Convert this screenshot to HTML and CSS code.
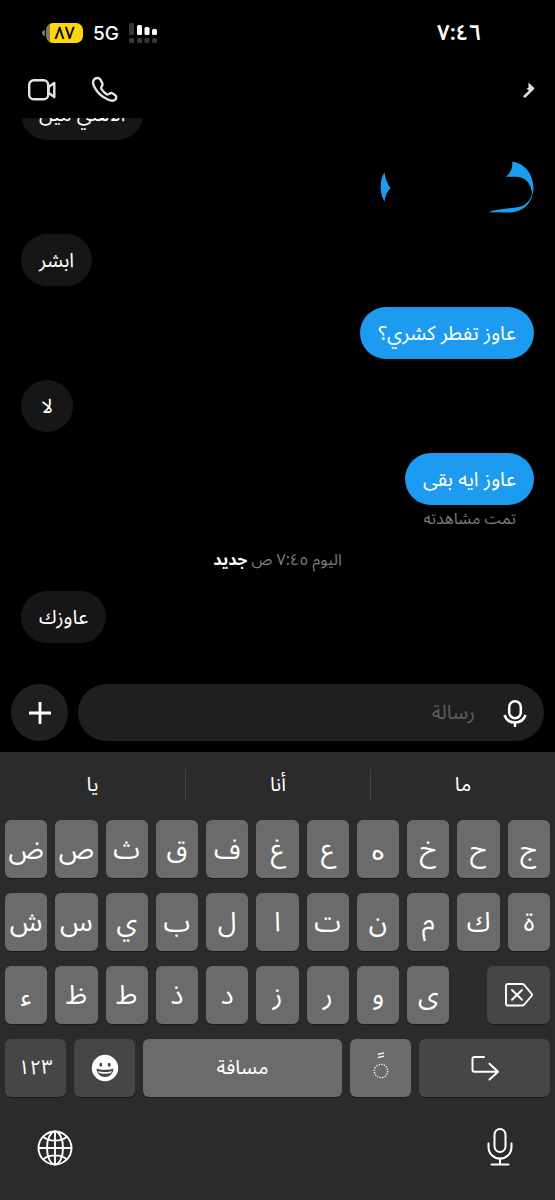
FILE: index.html
```html
<!DOCTYPE html>
<html lang="ar" dir="rtl">
<head>
<meta charset="utf-8">
<meta name="viewport" content="width=device-width, initial-scale=1">
<title>رسائل</title>
<link rel="stylesheet" href="styles.css">
</head>
<body>
<div class="phone">
  <div class="status">
    <time class="clock">٧:٤٦</time>
    <div class="indicators">
      <div class="battery"><svg class="cap" viewBox="0 0 3 6" aria-hidden="true"><path d="M3 0v6C1 6 0 4.500 0 3s1-3 3-3z"/></svg><span class="level">٨٧</span></div>
      <span class="network">5G</span>
      <svg class="signal" viewBox="0 0 29 20" aria-label="إشارة">
        <g fill="#373737"><rect width="5" height="12" rx="1.500"/><rect y="15" width="5" height="5" rx="1.500"/><rect x="8" y="15" width="5" height="5" rx="1.500"/><rect x="15.500" y="15" width="5" height="5" rx="1.500"/><rect x="23" y="15" width="5" height="5" rx="1.500"/></g>
        <g fill="#fff"><rect x="8" y="2" width="5" height="10" rx="1.500"/><rect x="15.500" y="4" width="5" height="8" rx="1.500"/><rect x="23" y="6" width="5" height="6" rx="1.500"/></g>
      </svg>
    </div>
  </div>

  <header class="bar">
    <button class="plain" aria-label="رجوع"><svg class="back" viewBox="0 0 12 16"><path d="M5.500.5 11.500 6.300 10.500 7.800 2 16 0 14.300 6 8.500 3.500 7 5.500 5.500z" fill="#dededc"/></svg></button>
    <div class="calls">
      <button class="plain" aria-label="مكالمة فيديو"><svg class="call-icon" viewBox="0 0 28 28" fill="none" stroke="#e4e4e4" stroke-width="2.400" stroke-linejoin="round"><rect x="1.200" y="4.300" width="19" height="19" rx="4.600"/><path d="M20.500 10.900 26.300 7v14l-5.800-4.200z"/></svg></button>
      <button class="plain" aria-label="مكالمة صوتية"><svg class="call-icon" viewBox="0 0 28 28" fill="none" stroke="#e4e4e4" stroke-width="2.400" stroke-linejoin="round"><path d="M2.600 3C4.200 1.700 7 1.700 8.100 3.200l2.200 3.900c.6 1.300.3 2.200-.6 3.300-.9 1.100-.9 1.700 0 3 1.300 1.900 2.700 3.300 4.500 4.500 1.200.8 1.900.8 3 0 1.100-.9 2.200-1.100 3.500-.4l2.600 1.700c1.400 1.100 1.300 3.400-.2 4.600-1.700 1.300-4.200 1.100-7.200-.3C9.700 20.700 4.500 15.500 1.900 9.900.6 7 .8 4.600 2.600 3z"/></svg></button>
    </div>
  </header>

  <main class="chat">
    <p class="bubble in">الاهلي مين</p>
    <svg class="covered" viewBox="0 0 154 52" aria-hidden="true"><path fill="#1d9bf0" d="M4.500 11.500C5.500 18 7 22 10.500 27 7 31 5 35 4.500 40.500-.7 33-.5 18 4.500 11.500zM132.300.7C145 2 153.500 14 153.500 27 153 42 143 51.500 129 51.500l-21-.3c12-4.500 24-3 35-6.500 5-3 8-7 9-12C151 21 144 15.500 135 15.700l-9.500 0C131 12 132.500 7 132.300.7z"/></svg>
    <p class="bubble in">ابشر</p>
    <p class="bubble out">عاوز تفطر كشري؟</p>
    <p class="bubble in">لا</p>
    <p class="bubble out">عاوز ايه بقى</p>
    <p class="seen">تمت مشاهدته</p>
    <p class="day">اليوم ٧:٤٥ ص <strong>جديد</strong></p>
    <p class="bubble in">عاوزك</p>
  </main>

  <form class="composer">
    <div class="field">
      <button class="plain" type="button" aria-label="رسالة صوتية"><svg class="voice" viewBox="0 0 24 28" fill="none" stroke="#fff" stroke-width="2.500"><rect x="6.200" y="2.200" width="11.600" height="17" rx="5.800"/><path d="M1.500 16C3 20.500 7 23.500 12 23.500S21 20.500 22.500 16M12 23.500V28"/></svg></button>
      <input class="message" type="text" aria-label="رسالة" placeholder="رسالة">
    </div>
    <button class="add" type="button" aria-label="إضافة"><svg class="plus" viewBox="0 0 22 22" stroke="#fff" stroke-width="2.800"><path d="M0 11h22M11 0v22"/></svg></button>
  </form>

  <section class="keyboard" dir="ltr" aria-label="لوحة المفاتيح">
    <div class="suggestions"><button>يا</button><button>أنا</button><button>ما</button></div>
    <div class="keys">
      <div class="row letters"><button class="key">ض</button><button class="key">ص</button><button class="key">ث</button><button class="key">ق</button><button class="key">ف</button><button class="key">غ</button><button class="key">ع</button><button class="key round-heh">ه</button><button class="key">خ</button><button class="key">ح</button><button class="key">ج</button></div>
      <div class="row letters"><button class="key">ش</button><button class="key">س</button><button class="key">ي</button><button class="key">ب</button><button class="key">ل</button><button class="key">ا</button><button class="key">ت</button><button class="key">ن</button><button class="key">م</button><button class="key">ك</button><button class="key">ة</button></div>
      <div class="row letters"><button class="key">ء</button><button class="key">ظ</button><button class="key">ط</button><button class="key">ذ</button><button class="key">د</button><button class="key">ز</button><button class="key">ر</button><button class="key">و</button><button class="key">ى</button><button class="key dark erase" aria-label="حذف"><svg class="glyph" viewBox="0 0 28 28" fill="none" stroke="#fff" stroke-width="1.900" stroke-linecap="round" stroke-linejoin="round"><path d="M3 3h14c1 0 1.600.3 2.300 1l7.200 8.600c.7.900.7 1.500 0 2.400l-7.200 8.500c-.7.700-1.300 1-2.300 1H3c-1.400 0-2-.7-2-2V5c0-1.300.6-2 2-2zM7 9l10 9.800M17 9 7 18.800"/></svg></button></div>
      <div class="row actions">
        <button class="key dark digits">١٢٣</button>
        <button class="key dark" aria-label="رموز تعبيرية"><svg class="glyph" viewBox="0 0 28 28"><circle cx="14" cy="14" r="13.200" fill="#fff"/><g fill="#444"><ellipse cx="9.800" cy="10.800" rx="1.400" ry="2"/><ellipse cx="18.200" cy="10.800" rx="1.400" ry="2"/><path d="M5.500 14.500c2.800 1.800 14.200 1.800 17 0C22 20 18.500 23 14 23S6 20 5.500 14.500z"/></g><path d="M7 17c3 1.300 11 1.300 14 0l-1 2c-3 1-9 1-12 0z" fill="#fff"/></svg></button>
        <button class="key space">مسافة</button>
        <button class="key" aria-label="تشكيل"><svg class="glyph" viewBox="0 0 28 28" fill="none" stroke="#fff"><circle cx="14" cy="17" r="6.700" stroke-width="1.300" stroke-dasharray="1.300 1.330"/><path d="m10.800.3 6.200-1.500M10.800 3.600 17 2.100" stroke-width="1.300"/></svg></button>
        <button class="key dark" aria-label="إدخال"><svg class="glyph" viewBox="0 0 28 28" fill="none" stroke="#fff" stroke-width="2" stroke-linecap="round" stroke-linejoin="round"><path d="M13 3H3.500C2 3 1.500 3.700 1.500 5v10.500c0 1.500.7 2.200 2 2.200H27M18.500 9.800l8.500 8-8.500 7.700"/></svg></button>
      </div>
    </div>
    <div class="foot">
      <button class="plain" aria-label="تغيير اللغة"><svg class="foot-icon" viewBox="0 0 36 36" fill="none" stroke="#fff" stroke-width="1.900"><circle cx="18" cy="18" r="16.500"/><ellipse cx="18" cy="18" rx="8" ry="16.500"/><path d="M18 1.500v33M1.500 18h33M6 6.500C12 12 24 12 30 6.500M6 29.500C12 24 24 24 30 29.500"/></svg></button>
      <button class="plain" aria-label="إملاء"><svg class="foot-icon" viewBox="0 0 36 36" fill="none" stroke="#fff" stroke-width="2" stroke-linecap="round"><rect x="12.500" y="-1" width="11" height="23" rx="5.500"/><path d="M6.500 13.500V17c0 6.500 5 11.500 11.500 11.500S29.500 23.500 29.500 17v-3.500M18 28.500v5.500M9.500 34.500h17"/></svg></button>
    </div>
  </section>
</div>
</body>
</html>
```
FILE: styles.css
```css
* { box-sizing: border-box; }

body {
  margin: 0;
  background: #000;
  color: #fff;
  font-family: "Noto Sans Arabic", "Noto Sans", "DejaVu Sans", sans-serif;
}

button, input { font: inherit; color: inherit; border: 0; margin: 0; }
button { cursor: pointer; }
p { margin: 0; }
svg { display: block; overflow: visible; }

.plain { background: none; padding: 0; }

.phone {
  display: flex;
  flex-direction: column;
  min-height: 100vh;
}

.status {
  display: flex;
  align-items: center;
  justify-content: space-between;
  height: 66px;
  padding: 0 74px 0 42px;
}
.clock { font-size: 22px; font-weight: 600; }
.indicators { display: flex; align-items: center; gap: 10px; direction: ltr; }
.battery { display: flex; align-items: center; gap: 1px; }
.cap { width: 3px; height: 6px; fill: #777; }
.level {
  width: 37px;
  height: 20px;
  border-radius: 7px;
  background: linear-gradient(to right, #857b50 4px, #fed709 4px);
  color: #000;
  font-size: 18px;
  font-weight: 500;
  line-height: 20px;
  text-align: center;
}
.network { font-family: Inter, sans-serif; font-size: 19px; font-weight: 500; }
.signal { width: 29px; height: 20px; }

.bar {
  display: flex;
  align-items: center;
  justify-content: space-between;
  height: 52px;
  padding: 0 20px 4px 28px;
}
.back { width: 12px; height: 16px; }
.calls { display: flex; gap: 36px; direction: ltr; }
.call-icon { width: 28px; height: 28px; }

.chat {
  flex: 1 1 0;
  min-height: 0;
  display: flex;
  flex-direction: column;
  justify-content: flex-end;
  gap: 21px;
  padding: 0 21px 41px;
  overflow: hidden;
}
.bubble {
  flex: none;
  min-width: 52px;
  padding: 11px 18px 9px;
  border-radius: 26px;
  font-size: 20px;
  line-height: 32px;
  text-align: center;
}
.in { align-self: flex-end; background: #161616; }
.out { align-self: flex-start; background: #1d9bf0; }
.covered { flex: none; width: 154px; height: 52px; }
.seen {
  margin-top: -19px;
  padding: 0 18px;
  color: #7b7b7b;
  font-size: 16px;
  line-height: 24px;
}
.day {
  margin: -4px 0 -2px;
  color: #7b7b7b;
  font-size: 16px;
  line-height: 24px;
  text-align: center;
}
.day strong { color: #fff; }

.composer {
  display: flex;
  gap: 10px;
  padding: 0 11px 11px;
}
.field {
  flex: 1;
  min-width: 0;
  display: flex;
  align-items: center;
  gap: 28px;
  height: 57px;
  padding: 0 17px 0 24px;
  border-radius: 29px;
  background: #1f1f1f;
}
.voice { width: 24px; height: 28px; }
.message {
  flex: 1;
  min-width: 0;
  padding: 0;
  background: none;
  outline: 0;
  font-size: 20px;
}
.message::placeholder { color: #5e5e5e; opacity: 1; }
.add {
  display: grid;
  place-items: center;
  width: 57px;
  height: 57px;
  padding: 0;
  border-radius: 50%;
  background: #1f1f1f;
}
.plus { width: 22px; height: 22px; }

.keyboard { background: #2b2b2b; }
.suggestions {
  display: grid;
  grid-template-columns: repeat(3, 1fr);
  padding: 17px 0 19px;
}
.suggestions button {
  height: 32px;
  padding: 0;
  background: none;
  font-size: 20px;
  line-height: 32px;
}
.suggestions button + button { border-left: 1px solid #444; }

.keys { display: grid; gap: 15px; padding: 0 5px; }
.row { display: grid; gap: 8px; }
.letters { grid-template-columns: repeat(11, 1fr); }
.actions { grid-template-columns: 61fr 61fr 199fr 61fr 131fr; }
.key {
  display: grid;
  place-items: center;
  min-width: 0;
  height: 58px;
  padding: 0;
  border-radius: 6px;
  background: #6b6b6b;
  box-shadow: 0 1px 0 #1b1b1b;
  font-size: 27px;
  line-height: 40px;
}
.letters .key { padding-top: 2px; }
.letters .round-heh { font-family: "DejaVu Sans", sans-serif; font-size: 27px; }
.letters .erase { padding-top: 0; }
.dark { background: #464646; }
.erase { grid-column: span 2; justify-self: end; width: 68%; }
.digits, .space { font-size: 20px; }
.glyph { width: 28px; height: 28px; }

.foot {
  display: flex;
  justify-content: space-between;
  padding: 33px 37px 34px;
}
.foot-icon { width: 36px; height: 36px; }
```
